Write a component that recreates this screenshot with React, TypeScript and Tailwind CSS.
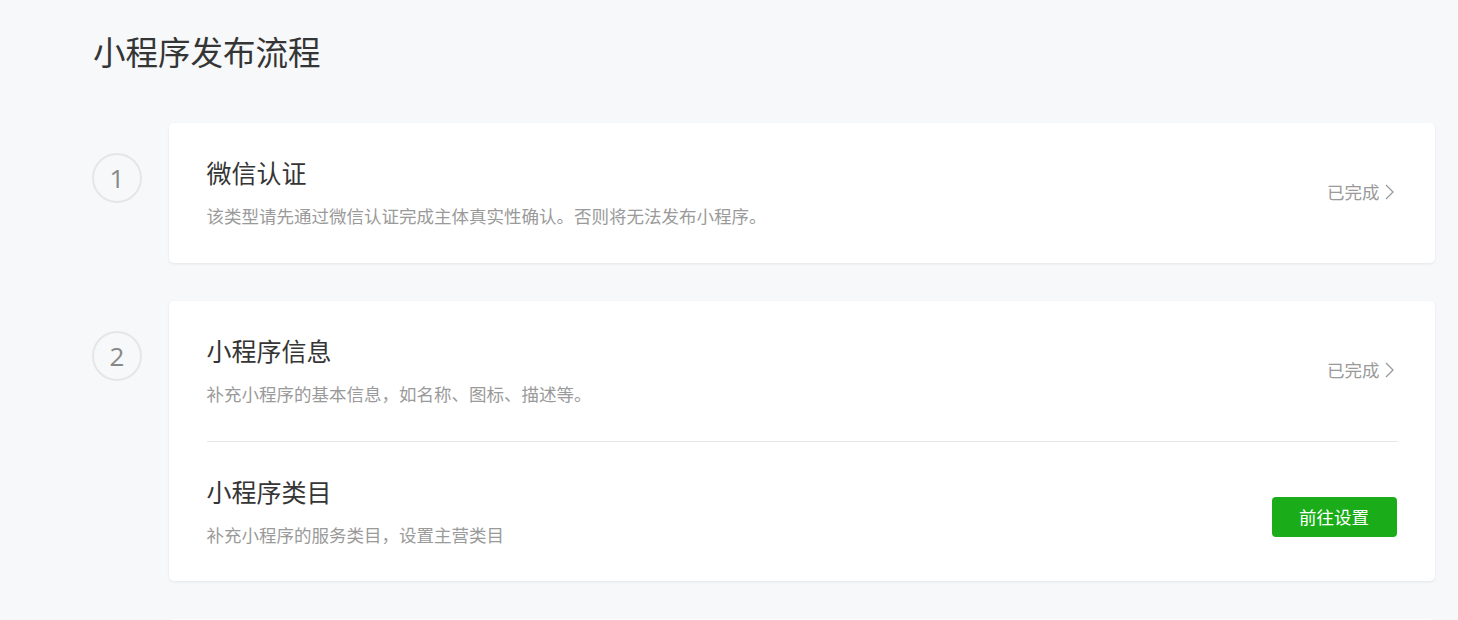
import React from "react";

const font = { fontFamily: '"Noto Sans CJK SC", "Noto Sans", sans-serif' };

function Chevron() {
  return (
    <svg width="9" height="16" viewBox="0 0 9 16" fill="none" className="ml-[5px]">
      <path d="M1 1 L8 8 L1 15" stroke="#9a9a9a" strokeWidth="1.3" />
    </svg>
  );
}

function Section({
  title,
  desc,
  right,
  divider,
}: {
  title: string;
  desc: string;
  right: React.ReactNode;
  divider?: boolean;
}) {
  return (
    <div
      className={
        "flex items-center justify-between h-[140px] " +
        (divider ? "border-t border-[#e7e7e7]" : "")
      }
    >
      <div className="flex flex-col -mt-[3px]">
        <div className="text-[25px] leading-[35px] text-[#353535]">{title}</div>
        <div className="mt-[13px] text-[17.5px] leading-[25px] text-[#9a9a9a]">{desc}</div>
      </div>
      {right}
    </div>
  );
}

function Done() {
  return (
    <div className="flex items-center text-[17.5px] leading-[25px] text-[#9a9a9a] mr-[4px] -mt-[3px]">
      <span>已完成</span>
      <Chevron />
    </div>
  );
}

function Step({ n, children }: { n?: number; children: React.ReactNode }) {
  return (
    <div className="flex gap-[27px]">
      <div
        className={
          "mt-[30px] w-[50px] h-[50px] shrink-0 rounded-full flex items-center justify-center text-[26px] text-[#888888] " +
          (n ? "border-2 border-[#e6e6e6]" : "")
        }
        style={{ fontFamily: '"Open Sans", "Noto Sans", sans-serif' }}
      >
        {n}
      </div>
      <div className="flex-1 bg-white rounded-[5px] shadow-[0_1px_3px_rgba(0,0,0,0.08)] px-[37.5px]">
        {children}
      </div>
    </div>
  );
}

export default function App() {
  return (
    <div className="min-h-screen bg-[#f6f8f9] pl-[92px] pr-[23px] pt-[28px] pb-[40px]" style={font}>
      <h1 className="text-[32.5px] leading-[45px] text-[#353535] font-normal pl-[1px]">
        小程序发布流程
      </h1>
      <div className="mt-[50px] flex flex-col gap-[38px]">
        <Step n={1}>
          <Section
            title="微信认证"
            desc="该类型请先通过微信认证完成主体真实性确认。否则将无法发布小程序。"
            right={<Done />}
          />
        </Step>
        <Step n={2}>
          <Section title="小程序信息" desc="补充小程序的基本信息，如名称、图标、描述等。" right={<Done />} />
          <Section
            title="小程序类目"
            desc="补充小程序的服务类目，设置主营类目"
            divider
            right={
              <button className="mt-[10px] w-[125px] h-[40px] bg-[#1aad19] rounded-[4px] text-white text-[17.5px] leading-[25px] mr-[1px]">
                前往设置
              </button>
            }
          />
        </Step>
        <Step>
          <div className="h-[140px]" />
        </Step>
      </div>
    </div>
  );
}
